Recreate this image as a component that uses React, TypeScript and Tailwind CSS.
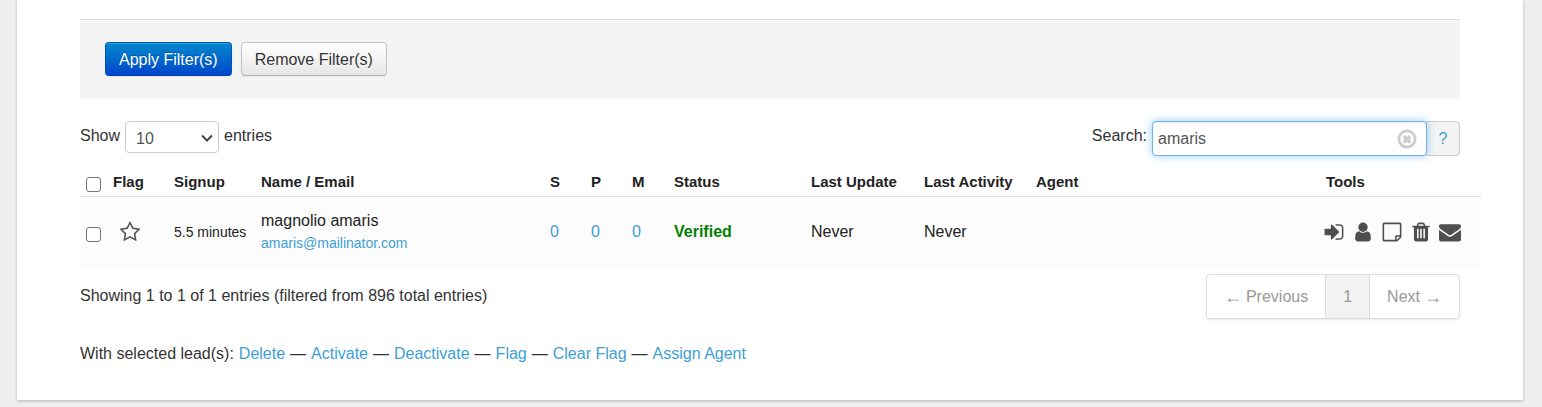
import React, { useState } from 'react';

interface Lead {
  id: number;
  signup: string;
  name: string;
  email: string;
  counts: number[];
  status: string;
  lastUpdate: string;
  lastActivity: string;
  agent: string;
}

const leads: Lead[] = [
  {
    id: 1,
    signup: '5.5 minutes',
    name: 'magnolio amaris',
    email: 'amaris@mailinator.com',
    counts: [0, 0, 0],
    status: 'Verified',
    lastUpdate: 'Never',
    lastActivity: 'Never',
    agent: '',
  },
];

const columns = [
  { label: 'Flag', width: 'w-[61px]' },
  { label: 'Signup', width: 'w-[87px]' },
  { label: 'Name / Email', width: 'w-[289px]' },
  { label: 'S', width: 'w-[41px]' },
  { label: 'P', width: 'w-[41px]' },
  { label: 'M', width: 'w-[42px]' },
  { label: 'Status', width: 'w-[137px]' },
  { label: 'Last Update', width: 'w-[113px]' },
  { label: 'Last Activity', width: 'w-[112px]' },
  { label: 'Agent', width: '' },
  { label: 'Tools', width: 'w-[160px]' },
];

const bulkActions = ['Delete', 'Activate', 'Deactivate', 'Flag', 'Clear Flag', 'Assign Agent'];

const icons = {
  signIn:
    'M1312 896q0 26-19 45l-544 544q-19 19-45 19t-45-19-19-45v-288h-448q-26 0-45-19t-19-45v-384q0-26 19-45t45-19h448v-288q0-26 19-45t45-19 45 19l544 544q19 19 19 45zm352-352v704q0 119-84.5 203.5t-203.5 84.5h-320q-13 0-22.5-9.5t-9.5-22.5q0-4-1-20t-.5-26.5 3-23.5 10-19.5 20.5-6.5h320q66 0 113-47t47-113v-704q0-66-47-113t-113-47h-312l-11.5-1-11.5-3-8-5.5-7-9-2-13.5q0-4-1-20t-.5-26.5 3-23.5 10-19.5 20.5-6.5h320q119 0 203.5 84.5t84.5 203.5z',
  user: 'M1536 1399q0 109-62.5 187t-150.5 78h-854q-88 0-150.5-78t-62.5-187q0-85 8.5-160.5t31.5-152 58.5-131 94-89 134.5-34.5q131 128 313 128t313-128q76 0 134.5 34.5t94 89 58.5 131 31.5 152 8.5 160.5zm-256-887q0 159-112.5 271.5t-271.5 112.5-271.5-112.5-112.5-271.5 112.5-271.5 271.5-112.5 271.5 112.5 112.5 271.5z',
  note: 'M1528 1280h-248v248q29-10 41-22l185-185q12-12 22-41zm-280-128h288v-896h-1280v1280h896v-288q0-40 28-68t68-28zm416-928v1024q0 40-20 88t-48 76l-184 184q-28 28-76 48t-88 20h-1024q-40 0-68-28t-28-68v-1344q0-40 28-68t68-28h1344q40 0 68 28t28 68z',
  trash:
    'M704 1376v-704q0-14-9-23t-23-9h-64q-14 0-23 9t-9 23v704q0 14 9 23t23 9h64q14 0 23-9t9-23zm256 0v-704q0-14-9-23t-23-9h-64q-14 0-23 9t-9 23v704q0 14 9 23t23 9h64q14 0 23-9t9-23zm256 0v-704q0-14-9-23t-23-9h-64q-14 0-23 9t-9 23v704q0 14 9 23t23 9h64q14 0 23-9t9-23zm-544-992h448l-48-117q-7-9-17-11h-317q-10 2-17 11zm928 32v64q0 14-9 23t-23 9h-96v948q0 83-47 143.5t-113 60.5h-832q-66 0-113-58.5t-47-141.5v-952h-96q-14 0-23-9t-9-23v-64q0-14 9-23t23-9h309l70-167q15-37 54-63t79-26h320q40 0 79 26t54 63l70 167h309q14 0 23 9t9 23z',
  envelope:
    'M1792 710v794q0 66-47 113t-113 47h-1472q-66 0-113-47t-47-113v-794q44 49 101 87 362 246 497 345 57 42 92.5 65.5t94.5 48 110 24.5h2q51 0 110-24.5t94.5-48 92.5-65.5q170-123 498-345 57-39 100-87zm0-294q0 79-49 151t-122 123q-376 261-468 325-10 7-42.5 31t-54 38.5-52 32.5-57.5 27-50 9h-2q-23 0-50-9t-57.5-27-52-32.5-54-38.5-42.5-31q-91-64-262-182.5t-205-142.5q-62-42-117-115.5t-55-136.5q0-78 41.5-130t118.5-52h1472q65 0 112.5 47t47.5 113z',
  star: 'M1201 1004l306-297-422-62-189-382-189 382-422 62 306 297-73 421 378-199 377 199zm527-357q0 22-26 48l-363 354 86 500q1 7 1 20 0 50-41 50-19 0-40-12l-449-236-449 236q-22 12-40 12-21 0-31.5-14.5t-10.5-35.5q0-6 2-20l86-500-364-354q-25-27-25-48 0-37 56-46l502-73 225-455q19-41 49-41t49 41l225 455 502 73q56 9 56 46z',
  clear:
    'M1225 1111l-146 146q-10 10-23 10t-23-10l-137-137-137 137q-10 10-23 10t-23-10l-146-146q-10-10-10-23t10-23l137-137-137-137q-10-10-10-23t10-23l146-146q10-10 23-10t23 10l137 137 137-137q10-10 23-10t23 10l146 146q10 10 10 23t-10 23l-137 137 137 137q10 10 10 23t-10 23zm215-215q0-148-73-273t-198-198-273-73-273 73-198 198-73 273 73 273 198 198 273 73 273-73 198-198 73-273zm224 0q0 209-103 385.5t-279.5 279.5-385.5 103-385.5-103-279.5-279.5-103-385.5 103-385.5 279.5-279.5 385.5-103 385.5 103 279.5 279.5 103 385.5z',
};

const tools: Array<{ label: string; icon: keyof typeof icons }> = [
  { label: 'Sign in', icon: 'signIn' },
  { label: 'Profile', icon: 'user' },
  { label: 'Notes', icon: 'note' },
  { label: 'Delete', icon: 'trash' },
  { label: 'Email', icon: 'envelope' },
];

const Icon: React.FC<{ name: keyof typeof icons }> = ({ name }) => (
  <svg viewBox="0 0 1792 1792" className="block size-[22px]" fill="currentColor" aria-hidden="true">
    <path d={icons[name]} />
  </svg>
);

const FilterBar: React.FC = () => (
  <div className="flex gap-[9px] border-t border-[#dddddd] bg-[#f4f4f4] px-[25px] pt-[22px] pb-[23px]">
    <button className="h-[34px] rounded-[4px] border border-[#0055b3] border-b-[#003fb3] bg-linear-to-b from-[#0088cc] to-[#0044cc] px-[13px] pt-[2px] text-white shadow-[inset_0_1px_0_rgba(255,255,255,0.2),0_1px_2px_rgba(0,0,0,0.05)] text-shadow-[0_-1px_0_rgba(0,0,0,0.25)]">
      Apply Filter(s)
    </button>
    <button className="h-[34px] rounded-[4px] border border-[#c5c5c5] border-b-[#b3b3b3] bg-linear-to-b from-white to-[#e6e6e6] px-[13px] pt-[2px] text-[#333333] shadow-[inset_0_1px_0_rgba(255,255,255,0.2),0_1px_2px_rgba(0,0,0,0.05)] text-shadow-[0_1px_1px_rgba(255,255,255,0.75)]">
      Remove Filter(s)
    </button>
  </div>
);

interface ToolbarProps {
  search: string;
  onSearch: (value: string) => void;
}

const Toolbar: React.FC<ToolbarProps> = ({ search, onSearch }) => (
  <div className="mt-[22px] flex items-start justify-between leading-[30px]">
    <label className="flex items-start gap-[5px]">
      Show
      <span className="relative">
        <select className="block h-8 w-[94px] appearance-none rounded-[4px] border border-[#cccccc] bg-white px-[10px] pt-[2px] text-[#555555]">
          <option>10</option>
          <option>25</option>
          <option>50</option>
          <option>100</option>
        </select>
        <svg
          viewBox="0 0 12 8"
          className="pointer-events-none absolute top-[13px] right-[6px] h-2 w-3"
          fill="none"
          stroke="#444444"
          strokeWidth="2"
          aria-hidden="true"
        >
          <path d="M1 1.5l5 5 5-5" />
        </svg>
      </span>
      entries
    </label>

    <div className="flex items-start">
      <label htmlFor="search" className="mr-[5px]">
        Search:
      </label>
      <div className="relative z-10">
        <input
          id="search"
          type="text"
          value={search}
          onChange={(e) => onSearch(e.target.value)}
          className="block h-[35px] w-[275px] rounded-[4px] border border-[#6bb3ec] bg-white pr-9 pl-[5px] text-[#555555] shadow-[inset_0_1px_1px_rgba(0,0,0,0.075),0_0_8px_rgba(82,168,236,0.6)] outline-none"
        />
        <button
          aria-label="Clear search"
          onClick={() => onSearch('')}
          className="absolute top-[7px] right-[9px] text-[#cccccc]"
        >
          <Icon name="clear" />
        </button>
      </div>
      <button className="-ml-px h-[35px] w-[34px] rounded-r-[4px] border border-[#cccccc] bg-[#f4f4f4] text-[#3d9fd6]">
        ?
      </button>
    </div>
  </div>
);

const LeadRow: React.FC<{ lead: Lead }> = ({ lead }) => (
  <tr className="h-[71px] bg-[#fcfcfc]">
    <td className="pt-[5px] pl-[6px]">
      <input
        type="checkbox"
        aria-label={`Select ${lead.name}`}
        className="block size-[15px] appearance-none rounded-[3px] border border-[#767676] bg-white"
      />
    </td>
    <td className="pl-[6px]">
      <button aria-label="Flag" className="block pl-[5px] text-[#555555]">
        <Icon name="star" />
      </button>
    </td>
    <td className="pl-[5px] text-sm">{lead.signup}</td>
    <td className="pl-[5px]">
      <div className="leading-[22px]">{lead.name}</div>
      <a href="#email" className="block text-sm leading-[22px] text-[#3d9fd6]">
        {lead.email}
      </a>
    </td>
    {lead.counts.map((count, index) => (
      <td key={index} className="pl-[5px]">
        <a href="#count" className="text-[#3d9fd6]">
          {count}
        </a>
      </td>
    ))}
    <td className="pl-[5px] font-bold text-[#008000]">{lead.status}</td>
    <td className="pl-[5px]">{lead.lastUpdate}</td>
    <td className="pl-[5px]">{lead.lastActivity}</td>
    <td className="pl-[5px]">{lead.agent}</td>
    <td className="pl-[2px]">
      <div className="flex gap-[7px] text-[#4f4f4f]">
        {tools.map((tool) => (
          <button key={tool.label} aria-label={tool.label}>
            <Icon name={tool.icon} />
          </button>
        ))}
      </div>
    </td>
  </tr>
);

export default function App() {
  const [search, setSearch] = useState('amaris');

  return (
    <div className="min-h-screen bg-[#efefef] pr-[19px] pb-[6px] pl-[17px] font-['Liberation_Sans',Arial,sans-serif] text-base text-[#333333]">
      <div className="bg-white px-[63px] pt-[19px] pb-[35px] shadow-[0_1px_3px_rgba(0,0,0,0.25)]">
        <FilterBar />
        <Toolbar search={search} onSearch={setSearch} />

        {/* Lead list, runs slightly past the right edge of the content column */}
        <div className="mt-[12px] -mr-[21px]">
          <table className="w-full table-fixed border-collapse text-left text-[#222222]">
            <thead>
              <tr className="h-7 border-b border-[#dddddd] text-[15px]">
                <th className="w-7 pt-[5px] pl-[6px]">
                  <input
                    type="checkbox"
                    aria-label="Select all"
                    className="block size-[15px] appearance-none rounded-[3px] border border-[#767676] bg-white"
                  />
                </th>
                {columns.map((column) => (
                  <th key={column.label} className={`pl-[5px] leading-5 font-bold ${column.width}`}>
                    {column.label}
                  </th>
                ))}
              </tr>
            </thead>
            <tbody>
              {leads.map((lead) => (
                <LeadRow key={lead.id} lead={lead} />
              ))}
            </tbody>
          </table>
        </div>

        <div className="mt-[7px] flex items-start justify-between">
          <p className="leading-[43px]">Showing 1 to 1 of 1 entries (filtered from 896 total entries)</p>
          <nav
            aria-label="Pagination"
            className="flex h-[45px] rounded-[4px] border border-[#dddddd] text-[#999999] shadow-[0_1px_2px_rgba(0,0,0,0.1)]"
          >
            <button className="flex items-center gap-1 px-[17px]">
              <span className="text-lg">←</span>
              <span>Previous</span>
            </button>
            <button className="border-x border-[#dddddd] bg-[#f2f2f2] px-[17px]">1</button>
            <button className="flex items-center gap-1 px-[17px]">
              <span>Next</span>
              <span className="text-lg">→</span>
            </button>
          </nav>
        </div>

        <div className="mt-[23px] flex flex-wrap gap-x-[5px] leading-[23px]">
          <span>With selected lead(s):</span>
          {bulkActions.map((action, index) => (
            <React.Fragment key={action}>
              {index > 0 && <span>—</span>}
              <a href="#action" className="text-[#3d9fd6]">
                {action}
              </a>
            </React.Fragment>
          ))}
        </div>
      </div>
    </div>
  );
}
